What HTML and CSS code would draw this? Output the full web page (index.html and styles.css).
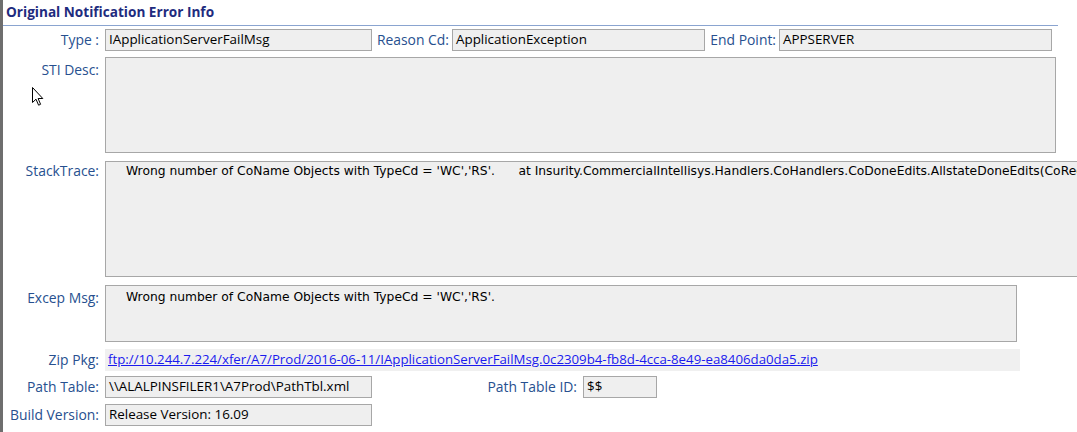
FILE: index.html
```html
<!DOCTYPE html>
<html>
<head>
<meta charset="utf-8">
<link rel="stylesheet" href="styles.css">
</head>
<body>
<div class="frame">
  <div class="title">Original Notification Error Info</div>
  <div class="rows">
    <div class="row r-short">
      <div class="label">Type :</div>
      <div class="box w267">IApplicationServerFailMsg</div>
      <div class="label inline l-reason">Reason Cd:</div>
      <div class="box w253">ApplicationException</div>
      <div class="label inline l-end">End Point:</div>
      <div class="box w273">APPSERVER</div>
    </div>
    <div class="row r-sti">
      <div class="label top">STI Desc:</div>
      <div class="box tall w951"></div>
    </div>
    <div class="row r-stack">
      <div class="label top0">StackTrace:</div>
      <div class="box tall trace t-stack wide">Wrong number of CoName Objects with TypeCd = 'WC','RS'.&nbsp;&nbsp;&nbsp;&nbsp;&nbsp;&nbsp;at Insurity.CommercialIntellisys.Handlers.CoHandlers.CoDoneEdits.AllstateDoneEdits(CoRequest request)</div>
    </div>
    <div class="row r-excep">
      <div class="label top">Excep Msg:</div>
      <div class="box tall trace w912">Wrong number of CoName Objects with TypeCd = 'WC','RS'.</div>
    </div>
    <div class="row r-zip">
      <div class="label">Zip Pkg:</div>
      <div class="zip"><a href="#">ftp://10.244.7.224/xfer/A7/Prod/2016-06-11/IApplicationServerFailMsg.0c2309b4-fb8d-4cca-8e49-ea8406da0da5.zip</a></div>
    </div>
    <div class="row r-path">
      <div class="label">Path Table:</div>
      <div class="box w267">\\ALALPINSFILER1\A7Prod\PathTbl.xml</div>
      <div class="label inline l-pid">Path Table ID:</div>
      <div class="box w74">$$</div>
    </div>
    <div class="row r-build">
      <div class="label">Build Version:</div>
      <div class="box w267">Release Version: 16.09</div>
    </div>
  </div>
  <svg class="cursor" width="13" height="20" viewBox="0 0 13 20">
    <path d="M0.5 0.5 L0.5 15.5 L4 12.2 L6.6 18.2 L8.6 17.3 L6.1 11.5 L10.8 11.5 Z" fill="#fff" stroke="#000" stroke-width="1" stroke-linejoin="miter"/>
  </svg>
</div>
</body>
</html>
```

FILE: styles.css
```css
html, body {
  margin: 0;
  padding: 0;
  background: #fff;
}
body {
  width: 1077px;
  height: 432px;
  overflow: hidden;
  font-family: "Open Sans", "Noto Sans", sans-serif;
  font-size: 13.4px;
}
.frame {
  position: relative;
  height: 432px;
  border-left: 3px solid #6e6e6e;
  overflow: hidden;
}
.title {
  height: 25px;
  line-height: 24px;
  margin-right: 19px;
  padding-left: 3px;
  border-bottom: 1px solid #8aa4d0;
  font-family: "Open Sans", sans-serif;
  font-weight: 700;
  font-size: 13.6px;
  color: #1e2b7e;
}
.rows {
  display: flex;
  flex-direction: column;
}
.row {
  display: flex;
  align-items: center;
  white-space: nowrap;
}
.r-short { margin-top: 3px; height: 22px; }
.r-sti { margin-top: 6px; height: 96px; align-items: flex-start; }
.r-stack { margin-top: 8px; height: 116px; align-items: flex-start; }
.r-excep { margin-top: 8px; height: 57px; align-items: flex-start; }
.r-zip { margin-top: 7px; height: 22px; }
.r-path { margin-top: 5px; height: 22px; }
.r-build { margin-top: 6px; height: 22px; }

.label {
  width: 96px;
  flex: none;
  box-sizing: content-box;
  text-align: right;
  padding-right: 6px;
  color: #27508f;
  font-size: 13.9px;
  line-height: 20px;
}
.label.top { padding-top: 3px; }
.label.top0 { padding-top: 0; }
.l-reason { width: 77px; padding-right: 3px; }
.l-end { width: 71px; padding-right: 3px; }
.l-pid { width: 205px; padding-right: 6px; }

.box {
  flex: none;
  box-sizing: border-box;
  height: 22px;
  border: 1px solid #a7a7a7;
  background: #efefef;
  color: #000;
  padding-left: 3px;
  line-height: 19px;
  overflow: hidden;
}
.box.tall { height: 100%; }
.trace {
  font-family: "DejaVu Sans", sans-serif;
  font-size: 12.3px;
  padding-left: 20px;
  padding-top: 2px;
  line-height: 18px;
}
.trace.t-stack { padding-top: 0; }
.wide { width: 1000px; }
.w267 { width: 267px; }
.w253 { width: 253px; }
.w273 { width: 273px; }
.w951 { width: 951px; }
.w912 { width: 912px; }
.w74 { width: 74px; }

.zip {
  flex: none;
  box-sizing: border-box;
  width: 915px;
  height: 22px;
  background: #f0f0f0;
  padding-left: 3px;
  line-height: 21px;
  font-size: 13.25px;
}
.zip a {
  color: #1a1aee;
  text-decoration: underline;
}
.cursor {
  position: absolute;
  left: 29px;
  top: 87px;
}
```
